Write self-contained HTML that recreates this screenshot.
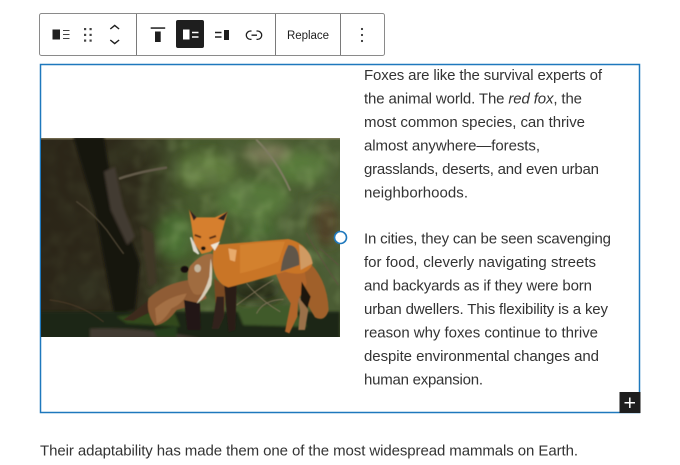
<!DOCTYPE html>
<html>
<head>
<meta charset="utf-8">
<style>
html,body{margin:0;padding:0;background:#fff;width:680px;height:465px;overflow:hidden}
svg{display:block}
.t{font-family:"Liberation Sans",sans-serif;font-size:15px;fill:#333}
</style>
</head>
<body>
<svg width="680" height="465" viewBox="0 0 680 465" xmlns="http://www.w3.org/2000/svg">
<defs>
<filter id="b1" x="-30%" y="-30%" width="160%" height="160%"><feGaussianBlur stdDeviation="16"/></filter>
<filter id="b2" x="-20%" y="-20%" width="140%" height="140%"><feGaussianBlur stdDeviation="4"/></filter>
<filter id="b3" x="-20%" y="-20%" width="140%" height="140%"><feGaussianBlur stdDeviation="1.800"/></filter>
<filter id="nd" x="0" y="0" width="100%" height="100%">
<feTurbulence type="fractalNoise" baseFrequency=".05" numOctaves="2" seed="4"/>
<feColorMatrix type="matrix" values="0 0 0 0 .1  0 0 0 0 .14  0 0 0 0 .06  2.500 0 0 0 -1.100"/>
<feGaussianBlur stdDeviation="1.500"/>
</filter>
<filter id="nl" x="0" y="0" width="100%" height="100%">
<feTurbulence type="fractalNoise" baseFrequency=".06" numOctaves="2" seed="9"/>
<feColorMatrix type="matrix" values="0 0 0 0 .4  0 0 0 0 .55  0 0 0 0 .22  0 2.500 0 0 -1.150"/>
<feGaussianBlur stdDeviation="1.500"/>
</filter>
<clipPath id="c"><rect x="41" y="138" width="299" height="199"/></clipPath>
<linearGradient id="bg" x1="0" y1="0" x2="1" y2="0">
<stop offset="0" stop-color="#2f2a1b"/><stop offset=".32" stop-color="#33321f"/><stop offset=".5" stop-color="#46592c"/><stop offset="1" stop-color="#4b5c34"/>
</linearGradient>
<linearGradient id="dk" x1="0" y1="0" x2="1" y2="0">
<stop offset="0" stop-color="#2a2417" stop-opacity=".8"/><stop offset=".3" stop-color="#2a2417" stop-opacity=".6"/><stop offset=".45" stop-color="#2a2417" stop-opacity="0"/>
</linearGradient>
</defs>

<!-- toolbar -->
<rect x="39.500" y="13.500" width="345" height="42" rx="2" fill="#fff" stroke="#8a8a8a"/>
<path d="M136.500 14V55M275.500 14V55M340.500 14V55" stroke="#7a7a7a" stroke-width="1"/>
<rect x="52.500" y="29.500" width="7.500" height="10" fill="#1e1e1e"/>
<path d="M63 30.500h6.500M63 34.500h6.500M63 38.500h6.500" stroke="#444" stroke-width="1.100"/>
<g fill="#444"><rect x="84" y="28" width="2.200" height="2.200"/><rect x="89.500" y="28" width="2.200" height="2.200"/><rect x="84" y="33.800" width="2.200" height="2.200"/><rect x="89.500" y="33.800" width="2.200" height="2.200"/><rect x="84" y="39.500" width="2.200" height="2.200"/><rect x="89.500" y="39.500" width="2.200" height="2.200"/></g>
<path d="M110.300 29l4.400-3.600 4.400 3.600M110.300 40l4.400 3.600 4.400-3.600" fill="none" stroke="#1e1e1e" stroke-width="1.400"/>
<rect x="150.700" y="27.300" width="14.500" height="1.500" fill="#1e1e1e"/>
<rect x="155" y="31.500" width="5.700" height="10.500" fill="#1e1e1e"/>
<rect x="176" y="20" width="28" height="28" rx="2" fill="#1e1e1e"/>
<rect x="183" y="29.500" width="6.500" height="10" fill="#fff"/>
<path d="M192 32.500h6.500M192 37h6.500" stroke="#fff" stroke-width="1.500"/>
<path d="M215 32.500h6.500M215 37h6.500" stroke="#1e1e1e" stroke-width="1.500"/>
<rect x="224" y="30" width="5" height="10" fill="#1e1e1e"/>
<path d="M251.500 31h-1a4.200 4.200 0 0 0 0 8.400h1M256.500 31h1a4.200 4.200 0 0 1 0 8.400h-1M251.500 35.200h5.500" fill="none" stroke="#1e1e1e" stroke-width="1.300"/>
<text x="287" y="39" font-family="Liberation Sans, sans-serif" font-size="11.500" fill="#1e1e1e" textLength="42" lengthAdjust="spacing">Replace</text>
<g fill="#333"><circle cx="362" cy="29" r="1.100"/><circle cx="362" cy="35" r="1.100"/><circle cx="362" cy="41" r="1.100"/></g>

<!-- block outline -->
<rect x="40.500" y="64.500" width="599" height="348" fill="#fff" stroke="#1e78bd" stroke-width="1.500"/>

<!-- photo -->
<g clip-path="url(#c)">
<rect x="41" y="138" width="299" height="199" fill="url(#bg)"/>
<g transform="translate(40,130) scale(.33333)">
<g filter="url(#b1)">
<ellipse cx="500" cy="120" rx="90" ry="50" fill="#5e7a3c"/>
<ellipse cx="780" cy="110" rx="90" ry="50" fill="#587a3a"/>
<ellipse cx="640" cy="210" rx="110" ry="60" fill="#56783a"/>
<ellipse cx="400" cy="320" rx="60" ry="70" fill="#4a7032"/>
<ellipse cx="680" cy="70" rx="70" ry="30" fill="#7c7a58"/>
<ellipse cx="860" cy="280" rx="40" ry="70" fill="#4f3f28"/>
<ellipse cx="660" cy="300" rx="60" ry="30" fill="#486a30"/>
<ellipse cx="250" cy="70" rx="50" ry="30" fill="#414a2a"/>
<ellipse cx="130" cy="470" rx="70" ry="50" fill="#37402a"/>
<ellipse cx="650" cy="480" rx="80" ry="40" fill="#262a18"/>
</g>
</g>
<rect x="41" y="138" width="299" height="199" filter="url(#nl)" opacity=".3"/>
<rect x="41" y="138" width="299" height="199" filter="url(#nd)" opacity=".35"/>
<rect x="41" y="138" width="299" height="199" fill="url(#dk)"/>
<g transform="translate(40,130) scale(.33333)">
<rect x="0" y="25" width="900" height="3" fill="#8f8668"/>
<g filter="url(#b2)">
<path d="M100 22H192L208 120 240 240 300 400 285 540 222 550 190 380 165 240Z" fill="#17120e"/>
<path d="M192 125L225 110 250 230 285 320 262 345 212 240Z" fill="#433a30"/>
<path d="M302 290L340 310 350 460 325 470Z" fill="#3f3726"/>
<rect x="0" y="545" width="900" height="85" fill="#1f2812"/>
<path d="M150 596Q300 590 480 625H150Z" fill="#433b30"/>
<path d="M590 535L750 525 800 590 610 585Z" fill="#3f5a2a"/>
<path d="M230 560L400 540 420 590 260 580Z" fill="#33481f"/>
<path d="M340 600L410 590 410 622 350 622Z" fill="#26401a"/>
</g>
<g filter="url(#b3)" fill="none" stroke-linecap="round">
<path d="M240 145Q300 125 378 113" stroke="#625a48" stroke-width="8"/>
<path d="M110 215Q160 250 200 300 235 350 250 370" stroke="#4d4434" stroke-width="4"/>
<path d="M800 310Q830 370 895 465M840 355L895 405" stroke="#5f5240" stroke-width="3"/>
<path d="M620 460Q660 510 720 545M590 525Q650 480 700 450M650 550Q670 510 730 508" stroke="#84765c" stroke-width="2.500"/>
<path d="M30 510Q120 520 190 575" stroke="#4b3a28" stroke-width="3"/>
<path d="M650 30Q710 90 750 180" stroke="#7f7c62" stroke-width="6"/>
</g>
<g filter="url(#b3)">
<!-- tail -->
<path d="M795 385Q862 440 866 540 855 578 825 562 785 500 780 440Z" fill="#a0602a"/>
<!-- back legs -->
<path d="M770 490L805 540 795 600 775 600 780 540Z" fill="#9a7048"/>
<path d="M705 425L790 400 800 460 775 510 772 560 748 610 735 605 752 520 725 475Z" fill="#b0652a"/>
<path d="M785 455L812 500 802 535 782 510Z" fill="#1e1610"/>
<!-- front legs -->
<path d="M522 445L556 470 552 560 535 597 516 597 528 540Z" fill="#7a4a22"/>
<path d="M530 500L552 500 552 560 535 597 516 597Z" fill="#33241a"/>
<path d="M552 455L590 460 586 600 566 606 558 530Z" fill="#2a1d14"/>
<!-- body -->
<path d="M520 345Q640 335 745 327 805 340 818 400 800 445 735 425 650 452 565 472 525 460 518 400Z" fill="#c97528"/>
<path d="M600 345Q680 335 735 335L715 395Q650 420 600 430Z" fill="#d3812e"/>
<path d="M745 345Q780 345 778 405L722 425Q725 385 745 345Z" fill="#615748"/>
<path d="M777 343Q812 360 818 400L782 420Z" fill="#d09a62"/>
<path d="M565 355L590 360 585 395 570 390Z" fill="#e8ab6c"/>
<!-- cub -->
<path d="M250 570Q290 540 325 512L332 545 280 572Z" fill="#3e2c1c"/>
<path d="M325 505Q370 462 445 450 495 480 500 505 450 530 410 540 380 582 345 587 318 550 325 505Z" fill="#8f5c34"/>
<path d="M345 535Q385 500 440 490 430 520 395 535 370 575 350 580Z" fill="#a47044"/>
<path d="M432 510L480 520 482 600 442 600Z" fill="#241912"/>
<path d="M450 408Q490 365 518 372 520 420 512 470 480 505 460 490 432 450 450 408Z" fill="#a06c40"/>
<path d="M512 385Q520 425 514 465 490 510 470 520 498 480 508 440Z" fill="#d8cdb8"/>
<ellipse cx="434" cy="418" rx="12" ry="10" fill="#15110d"/>
<ellipse cx="473" cy="415" rx="10" ry="12" fill="#c4b69e"/>
<!-- head -->
<path d="M447 238L470 262 525 262 563 245 548 300 538 335 512 365 485 372 462 340 455 290Z" fill="#d67f2e"/>
<path d="M447 238L470 262 461 272Z" fill="#2a2420"/>
<path d="M563 245L533 266 552 272Z" fill="#2a2420"/>
<path d="M452 322L476 372 462 362Z" fill="#ddd8cc" stroke="#ddd8cc" stroke-width="5"/>
<path d="M512 345L540 335 524 362Z" fill="#efe6d6"/>
<path d="M464 315L483 322M508 325L528 318" stroke="#5a2f12" stroke-width="6"/>
<ellipse cx="490" cy="355" rx="7" ry="6" fill="#1a1410"/>
</g>
</g>
</g>

<!-- resize handle -->
<circle cx="340.500" cy="237.500" r="6" fill="#fff" stroke="#1e78bd" stroke-width="1.600"/>

<!-- text -->
<g>
<text class="t" x="364" y="80" textLength="238" lengthAdjust="spacing">Foxes are like the survival experts of</text>
<text class="t" x="364" y="103.500" textLength="218" lengthAdjust="spacing">the animal world. The <tspan font-style="italic">red fox</tspan>, the</text>
<text class="t" x="364" y="127" textLength="221" lengthAdjust="spacing">most common species, can thrive</text>
<text class="t" x="364" y="150.500" textLength="176" lengthAdjust="spacing">almost anywhere—forests,</text>
<text class="t" x="364" y="174" textLength="235" lengthAdjust="spacing">grasslands, deserts, and even urban</text>
<text class="t" x="364" y="197.500" textLength="104" lengthAdjust="spacing">neighborhoods.</text>
<text class="t" x="364" y="243.300" textLength="247" lengthAdjust="spacing">In cities, they can be seen scavenging</text>
<text class="t" x="364" y="266.800" textLength="232" lengthAdjust="spacing">for food, cleverly navigating streets</text>
<text class="t" x="364" y="290.400" textLength="228" lengthAdjust="spacing">and backyards as if they were born</text>
<text class="t" x="364" y="314" textLength="244" lengthAdjust="spacing">urban dwellers. This flexibility is a key</text>
<text class="t" x="364" y="337.500" textLength="234" lengthAdjust="spacing">reason why foxes continue to thrive</text>
<text class="t" x="364" y="361" textLength="235" lengthAdjust="spacing">despite environmental changes and</text>
<text class="t" x="364" y="384.600" textLength="119" lengthAdjust="spacing">human expansion.</text>
<text class="t" x="40" y="455.500" textLength="538" lengthAdjust="spacing">Their adaptability has made them one of the most widespread mammals on Earth.</text>
</g>

<!-- add block -->
<rect x="619.500" y="392" width="21" height="21" fill="#1e1e1e"/>
<path d="M629.800 397.500v10.500M624.500 402.700h10.500" stroke="#fff" stroke-width="1.500"/>
</svg>
</body>
</html>
